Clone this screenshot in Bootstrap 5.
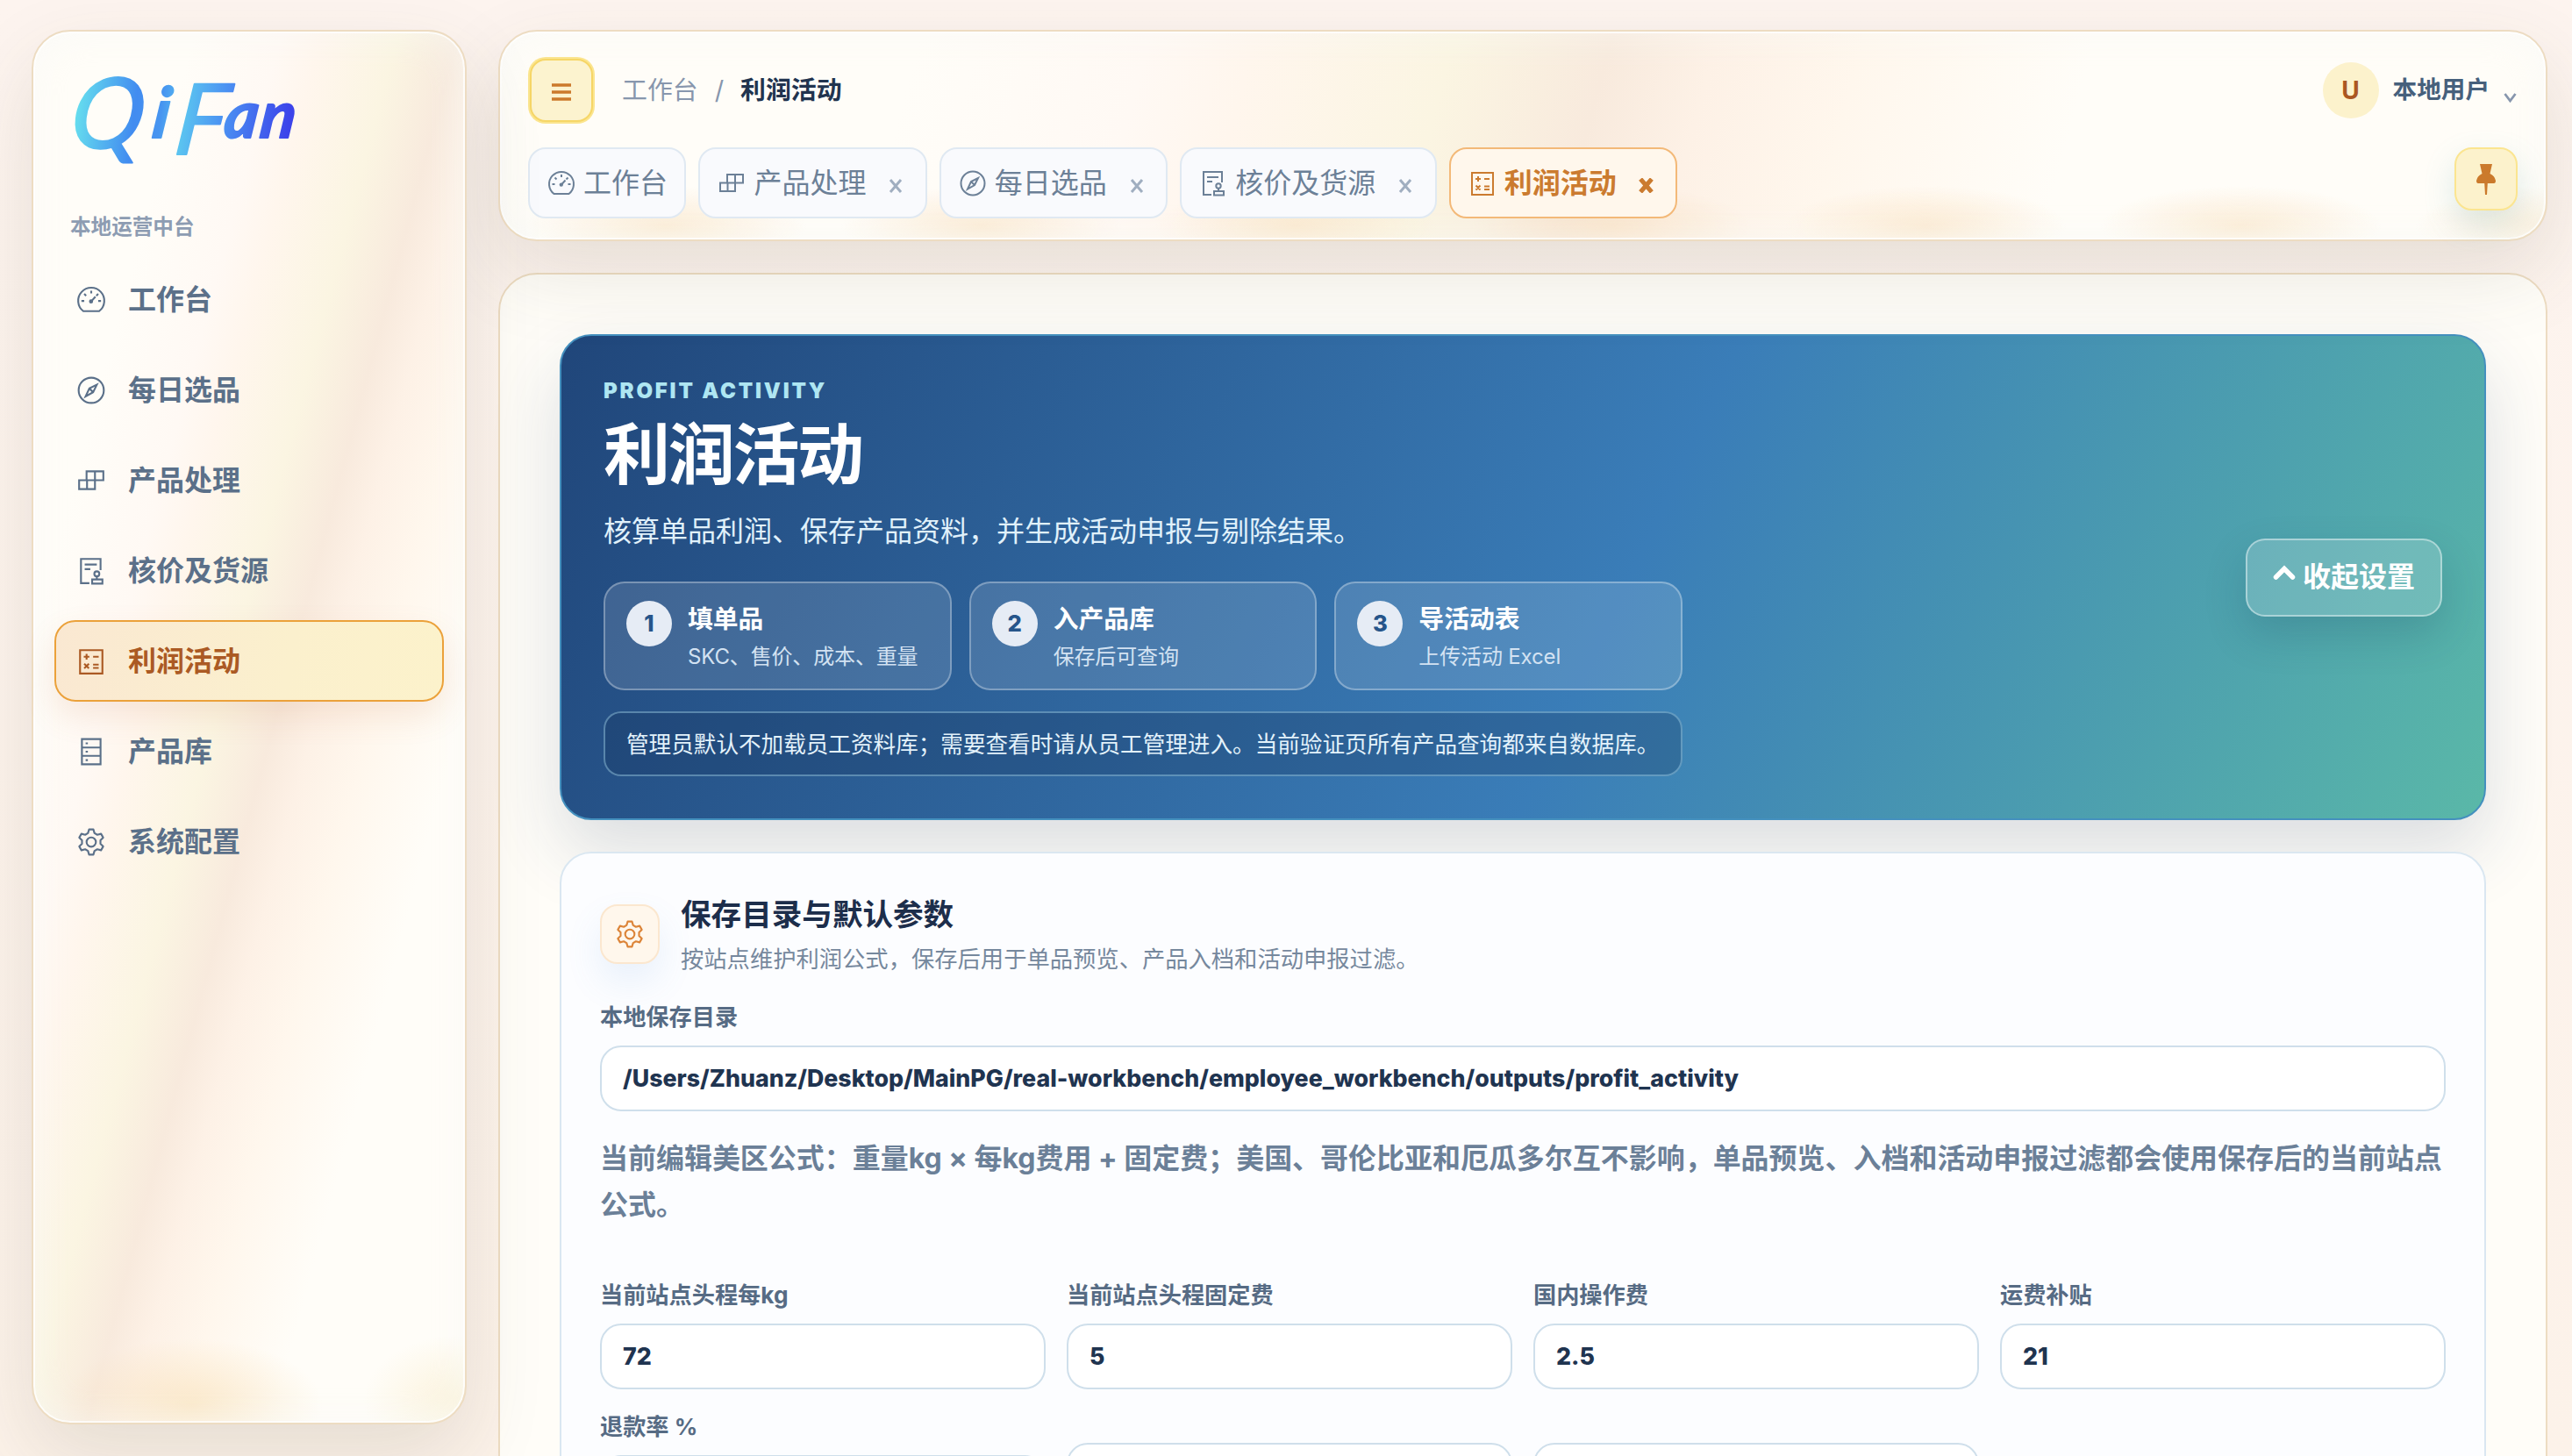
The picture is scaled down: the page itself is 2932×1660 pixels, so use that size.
<!DOCTYPE html>
<html lang="zh-CN">
<head>
<meta charset="utf-8">
<title>利润活动</title>
<meta name="viewport" content="width=device-width, initial-scale=1">
<link href="https://cdn.jsdelivr.net/npm/bootstrap@5.3.0/dist/css/bootstrap.min.css" rel="stylesheet">
<style>
:root{--sheen:linear-gradient(105deg,rgba(255,253,248,0) 20%,#fff9f4 31%,#fff6ed 36%,#fbf5e2 45.5%,#f8eadd 53%,#fdf1e6 58%,#fff7ed 65%,rgba(255,253,248,0) 76%);}
html,body{height:100%;overflow:hidden}
body{background:linear-gradient(180deg,#fdf4ef,#fcf2e9);font-family:Inter,"Noto Sans CJK SC",sans-serif;font-size:32px;line-height:1.5;color:#1f3350}
svg.ico{width:1em;height:1em;flex:none;fill:none;stroke:currentColor;stroke-width:2;stroke-linejoin:miter;display:block}
.shell{padding:34px 28px 0 36px;gap:36px;height:1660px;overflow:hidden}
.panel{border:2px solid #eddcc2;border-radius:44px;background-color:#fffdf8}
.glow{box-shadow:0 36px 90px rgba(80,75,55,.13),inset 0 0 0 2px rgba(255,255,255,.75),inset 0 0 48px rgba(246,250,246,.6);position:relative}
.side{width:496px;height:1590px;padding:0 24px;background-image:radial-gradient(ellipse 150px 76px at 180px 1566px,rgba(248,222,178,.6),transparent),radial-gradient(ellipse 110px 76px at 486px 1562px,rgba(248,232,190,.5),transparent),var(--sheen);z-index:2}
.brand-logo{display:block;width:290px;height:160px;margin:22px 0 0 2px}
.side-cap{font-size:23.6px;font-weight:600;color:#8d9cb2;line-height:36px;margin:23px 0 0 18px}
.side-nav{gap:10px;margin-top:18px}
.side-item{height:93px;border:2px solid transparent;border-radius:24px;padding:0 0 0 23px;gap:25px;color:#5b7089;font-weight:700;font-size:32px}
.side-item svg.ico{font-size:34px}
.side-item.on{color:#ab5a24;border-color:#eba13a;background:linear-gradient(100deg,#fae8d2,#fbf0cd 60%,#fcf2cb);box-shadow:0 16px 36px rgba(200,120,70,.14)}
.topbar{height:241px;padding:30px 32px 0;z-index:1;background-image:radial-gradient(ellipse 160px 46px at 50% 222px,rgba(248,218,178,.5),transparent),var(--sheen);background-size:359px 100%,100% 100%;background-position:10px 0,0 0}
.menu-btn{width:72px;height:72px;margin:1px 2px;border-radius:18px;background:#fcf3cf;border:2px solid #f6d667;box-shadow:0 0 0 2px #fbe58f;color:#cb7a2c}
.crumb{font-size:28.9px;color:#8796ad;margin-left:31px;gap:19px}
.crumb b{color:#21344f;font-weight:700}
.user-av{width:64px;height:64px;border-radius:50%;background:#fcf2cc;color:#ab5721;font-weight:700;font-size:28px}
.user-name{font-size:27.6px;font-weight:700;color:#46607c;margin-left:16px}
.user-caret{margin:18px 1px 0 16px}
.tabs-row{gap:14px;margin-top:28px}
.tabx{height:81px;border:2px solid #e0e9f2;border-radius:20px;background:#f9fafd;color:#6c8097;padding:0 19.4px 0 20px;gap:9px;font-size:32px}
.tabx.on{background:#fff7ec;border-color:#f3b978;color:#cb7b2f;font-weight:700}
.tabx .xx{width:16px;height:16px;margin:6px 6px 0 17px;stroke:#a0aec0;stroke-width:3;flex:none}
.tabx.on .xx{stroke:#cb7b2f;stroke-width:4.8;margin-left:16px;width:17px;height:17px}
.pin-btn{width:72px;height:72px;border:2px solid #fbe590;border-radius:20px;background:#fcf2cc;box-shadow:0 14px 36px rgba(80,160,170,.2)}
.mainx{height:1500px;margin-top:36px;padding:68px 68px 0}
.hero{height:554px;border:2px solid #4490be;border-radius:36px;padding:0 48px;background:linear-gradient(115deg,#20467a,#3a7db8 55%,#5ab8a8);box-shadow:0 36px 80px rgba(30,64,110,.16);color:#fff}
.eyebrow{font-size:24px;font-weight:900;letter-spacing:2.8px;color:#aee6f2;line-height:36px;margin-top:45px}
.hero h1{font-size:76px;font-weight:700;letter-spacing:-2.3px;line-height:84px;margin:12px 0 0}
.hero-sub{color:#e0f1fb;line-height:50px;margin-top:21px}
.steps{gap:20px;margin-top:32px;width:1230px}
.step-card{flex:1 1 0;height:124px;border:2px solid rgba(255,255,255,.3);border-radius:24px;background:rgba(255,255,255,.13);padding:20px 0 0 24px;gap:18px}
.step-no{width:52px;height:52px;border-radius:50%;background:#e6ecf5;color:#26558a;font-weight:800;font-size:25.6px;flex:none}
.step-t{font-size:28.8px;font-weight:700;line-height:42px}
.step-s{font-size:24px;line-height:40px;color:#d3e2f2;white-space:nowrap;margin-top:2px;letter-spacing:-.15px}
.hero-note{width:1230px;height:74px;border:2px solid rgba(160,210,235,.45);border-radius:20px;background:rgba(20,50,90,.28);padding:2px 0 0 24px;margin-top:24px;font-size:25.6px;color:#e3f2fb;white-space:nowrap}
.fold-btn{width:224px;height:89px;border:2px solid rgba(255,255,255,.42);border-radius:22px;background:rgba(255,255,255,.17);box-shadow:0 20px 48px rgba(20,60,90,.2);color:#fff;font-weight:700;font-size:32px;gap:8px}
.formbox{height:900px;margin-top:36px;border:2px solid #dae7f1;border-radius:36px;background:#fcfdff;padding:47px 44px 0}
.gear-tile{width:68px;height:68px;margin-top:11px;border:2px solid #fbe7cf;border-radius:20px;background:#fff7ec;color:#dc8438;font-size:34px;box-shadow:0 20px 40px rgba(90,150,220,.12)}
.sec-t{font-size:34.6px;font-weight:700;line-height:44px;color:#1d2e4b}
.sec-s{font-size:26.3px;line-height:40px;color:#76889d;margin-top:10px}
.lab{font-size:26.2px;font-weight:700;line-height:38px;color:#566b84}
.inp{height:75px;border:2px solid #cfdfeb;border-radius:24px;background:#fff;padding:0 24px;font-size:26.75px;font-weight:800;color:#1f3450}
.hint{font-size:31.98px;font-weight:700;line-height:52.8px;color:#6b8098}
.fields{gap:24px}
.fields .inp{margin-top:13px}
.fields .inp.nolab{margin-top:37px}
</style>
</head>
<body>
<svg width="0" height="0" class="position-absolute">
<symbol id="gauge" viewBox="0 0 32 32"><path d="M7.500 28A14 14 0 1 1 24.500 28z"/><path d="M16 6v3M5.500 17h3M23.500 17h3M8.500 9.500l2 2M23.500 9.500l-2 2M16 17.500l4.500-5"/><circle cx="15.800" cy="17.600" r="1.200" fill="currentColor"/></symbol>
<symbol id="compass" viewBox="0 0 32 32"><circle cx="16" cy="16" r="13.500"/><path d="M22 10l-4 8-8 4.500L14 14zM14 14l4 4"/></symbol>
<symbol id="blocks" viewBox="0 0 32 32"><path d="M11 6h18v9.500H11zM3 15.500h17V25H3zM20 6v9.500M11.500 15.500V25"/></symbol>
<symbol id="stampdoc" viewBox="0 0 32 32"><path d="M14 29H5V3h21v12M9 9h13M9 14h6"/><circle cx="22" cy="19" r="2.700"/><path d="M22 22v3M17 25h11v4.500H17z"/></symbol>
<symbol id="calc" viewBox="0 0 32 32"><path d="M4 4h24v25H4z"/><path d="M8 11h6M11 8v6M18 11h6M8.500 18.500l5 5M13.500 18.500l-5 5M18 19.500h6M18 23h6"/></symbol>
<symbol id="rack" viewBox="0 0 32 32"><path d="M6 2.500h20v27H6zM6 11.500h20M6 20.500h20"/><path d="M10 7h2.400M10 16h2.400M10 25h2.400"/></symbol>
<symbol id="gear" viewBox="0 0 32 32"><circle cx="16" cy="16" r="5"/><path stroke-linejoin="round" d="M13.700 2.500h4.600l1.200 4 3 1.700 4-1 2.300 4-2.900 3v3.600l2.900 3-2.300 4-4-1-3 1.700-1.200 4h-4.600l-1.200-4-3-1.700-4 1-2.300-4 2.900-3v-3.600l-2.900-3 2.300-4 4 1 3-1.700z"/></symbol>
</svg>
<div class="shell d-flex align-items-start">
<aside class="side panel glow flex-shrink-0">
<svg class="brand-logo" viewBox="0 0 290 160" role="img" aria-label="QiFan">
<defs><linearGradient id="lg" gradientUnits="userSpaceOnUse" x1="22" y1="0" x2="275" y2="0"><stop offset="0" stop-color="#6ae8ee"/><stop offset=".3" stop-color="#428cf0"/><stop offset=".42" stop-color="#4795f0"/><stop offset=".52" stop-color="#5bc4f0"/><stop offset=".7" stop-color="#4b92f2"/><stop offset="1" stop-color="#3c44ea"/></linearGradient></defs>
<text fill="url(#lg)" stroke="url(#lg)" stroke-width="2" stroke-linejoin="round" font-family="Lato" font-style="italic" font-weight="400" transform="skewX(-7)"><tspan x="27" y="111" font-size="112">Q</tspan><tspan x="120" y="99" font-size="80" font-weight="700">i</tspan><tspan x="147" y="118" font-size="112">F</tspan><tspan x="202" y="99" font-size="74" font-weight="700">a</tspan><tspan x="243" y="99" font-size="74" font-weight="700">n</tspan></text>
</svg>
<div class="side-cap">本地运营中台</div>
<nav class="side-nav d-flex flex-column">
<div class="side-item d-flex align-items-center"><svg class="ico"><use href="#gauge"/></svg>工作台</div>
<div class="side-item d-flex align-items-center"><svg class="ico"><use href="#compass"/></svg>每日选品</div>
<div class="side-item d-flex align-items-center"><svg class="ico"><use href="#blocks"/></svg>产品处理</div>
<div class="side-item d-flex align-items-center"><svg class="ico"><use href="#stampdoc"/></svg>核价及货源</div>
<div class="side-item on d-flex align-items-center"><svg class="ico"><use href="#calc"/></svg>利润活动</div>
<div class="side-item d-flex align-items-center"><svg class="ico"><use href="#rack"/></svg>产品库</div>
<div class="side-item d-flex align-items-center"><svg class="ico"><use href="#gear"/></svg>系统配置</div>
</nav>
</aside>
<div class="flex-grow-1">
<header class="topbar panel glow">
<div class="d-flex align-items-center">
<div class="menu-btn d-flex align-items-center justify-content-center"><svg width="22" height="20" viewBox="0 0 22 20" class="mt-1"><path d="M0 2h22M0 10h22M0 18h22" stroke="#cb7a2c" stroke-width="3.600"/></svg></div>
<div class="crumb d-flex"><span>工作台</span><span>/</span><b>利润活动</b></div>
<div class="d-flex align-items-center ms-auto">
<div class="user-av d-flex align-items-center justify-content-center">U</div>
<span class="user-name">本地用户</span>
<svg class="user-caret" width="15" height="12" viewBox="0 0 15 12"><path d="M1.500 1l6 8 6-8" fill="none" stroke="#8796ad" stroke-width="2.800"/></svg>
</div>
</div>
<div class="tabs-row d-flex">
<div class="tabx d-flex align-items-center"><svg class="ico"><use href="#gauge"/></svg>工作台</div>
<div class="tabx d-flex align-items-center"><svg class="ico"><use href="#blocks"/></svg>产品处理<svg class="xx" viewBox="0 0 16 16"><path d="M2 1l12 14M14 1L2 15"/></svg></div>
<div class="tabx d-flex align-items-center"><svg class="ico"><use href="#compass"/></svg>每日选品<svg class="xx" viewBox="0 0 16 16"><path d="M2 1l12 14M14 1L2 15"/></svg></div>
<div class="tabx d-flex align-items-center"><svg class="ico"><use href="#stampdoc"/></svg>核价及货源<svg class="xx" viewBox="0 0 16 16"><path d="M2 1l12 14M14 1L2 15"/></svg></div>
<div class="tabx on d-flex align-items-center"><svg class="ico"><use href="#calc"/></svg>利润活动<svg class="xx" viewBox="0 0 16 16"><path d="M2 1l12 14M14 1L2 15"/></svg></div>
<div class="pin-btn ms-auto d-flex justify-content-center"><svg width="22" height="36" viewBox="0 0 22 36" style="margin-top:17px"><path d="M4 0h14l-2.500 11q5.500 2.500 6.500 8 0 3-2 3h-7.200L12 35h-2L9.200 22H2q-2 0-2-3 1-5.500 6.500-8z" fill="#cb7a2c"/></svg></div>
</div>
</header>
<main class="mainx panel">
<section class="hero d-flex align-items-center justify-content-between">
<div class="align-self-start">
<div class="eyebrow">PROFIT ACTIVITY</div>
<h1>利润活动</h1>
<div class="hero-sub">核算单品利润、保存产品资料，并生成活动申报与剔除结果。</div>
<div class="steps d-flex">
<div class="step-card d-flex"><div class="step-no d-flex align-items-center justify-content-center">1</div><div><div class="step-t">填单品</div><div class="step-s">SKC、售价、成本、重量</div></div></div>
<div class="step-card d-flex"><div class="step-no d-flex align-items-center justify-content-center">2</div><div><div class="step-t">入产品库</div><div class="step-s">保存后可查询</div></div></div>
<div class="step-card d-flex"><div class="step-no d-flex align-items-center justify-content-center">3</div><div><div class="step-t">导活动表</div><div class="step-s">上传活动 Excel</div></div></div>
</div>
<div class="hero-note d-flex align-items-center">管理员默认不加载员工资料库；需要查看时请从员工管理进入。当前验证页所有产品查询都来自数据库。</div>
</div>
<div class="fold-btn d-flex align-items-center justify-content-center"><svg width="26" height="18" viewBox="0 0 26 18" style="margin-top:-10px"><path d="M3.500 14l9.500-9.500 9.500 9.500" fill="none" stroke="#fff" stroke-width="5.500" stroke-linecap="round"/></svg>收起设置</div>
</section>
<section class="formbox">
<div class="d-flex" style="gap:24px">
<div class="gear-tile d-flex align-items-center justify-content-center"><svg class="ico"><use href="#gear"/></svg></div>
<div><div class="sec-t">保存目录与默认参数</div><div class="sec-s">按站点维护利润公式，保存后用于单品预览、产品入档和活动申报过滤。</div></div>
</div>
<div class="lab" style="margin-top:27px">本地保存目录</div>
<div class="inp d-flex align-items-center" style="margin-top:13px">/Users/Zhuanz/Desktop/MainPG/real-workbench/employee_workbench/outputs/profit_activity</div>
<div class="hint" style="margin-top:28px">当前编辑美区公式：重量kg × 每kg费用 + 固定费；美国、哥伦比亚和厄瓜多尔互不影响，单品预览、入档和活动申报过滤都会使用保存后的当前站点公式。</div>
<div class="fields d-flex" style="margin-top:57px">
<div class="flex-fill w-25"><div class="lab">当前站点头程每kg</div><div class="inp d-flex align-items-center">72</div></div>
<div class="flex-fill w-25"><div class="lab">当前站点头程固定费</div><div class="inp d-flex align-items-center">5</div></div>
<div class="flex-fill w-25"><div class="lab">国内操作费</div><div class="inp d-flex align-items-center">2.5</div></div>
<div class="flex-fill w-25"><div class="lab">运费补贴</div><div class="inp d-flex align-items-center">21</div></div>
</div>
<div class="fields d-flex" style="margin-top:24px">
<div class="flex-fill w-25"><div class="lab">退款率 %</div><div class="inp"></div></div>
<div class="flex-fill w-25"><div class="inp nolab"></div></div>
<div class="flex-fill w-25"><div class="inp nolab"></div></div>
<div class="flex-fill w-25"></div>
</div>
</section>
</main>
</div>
</div>
<script src="https://cdn.jsdelivr.net/npm/bootstrap@5.3.0/dist/js/bootstrap.bundle.min.js"></script>
</body>
</html>
